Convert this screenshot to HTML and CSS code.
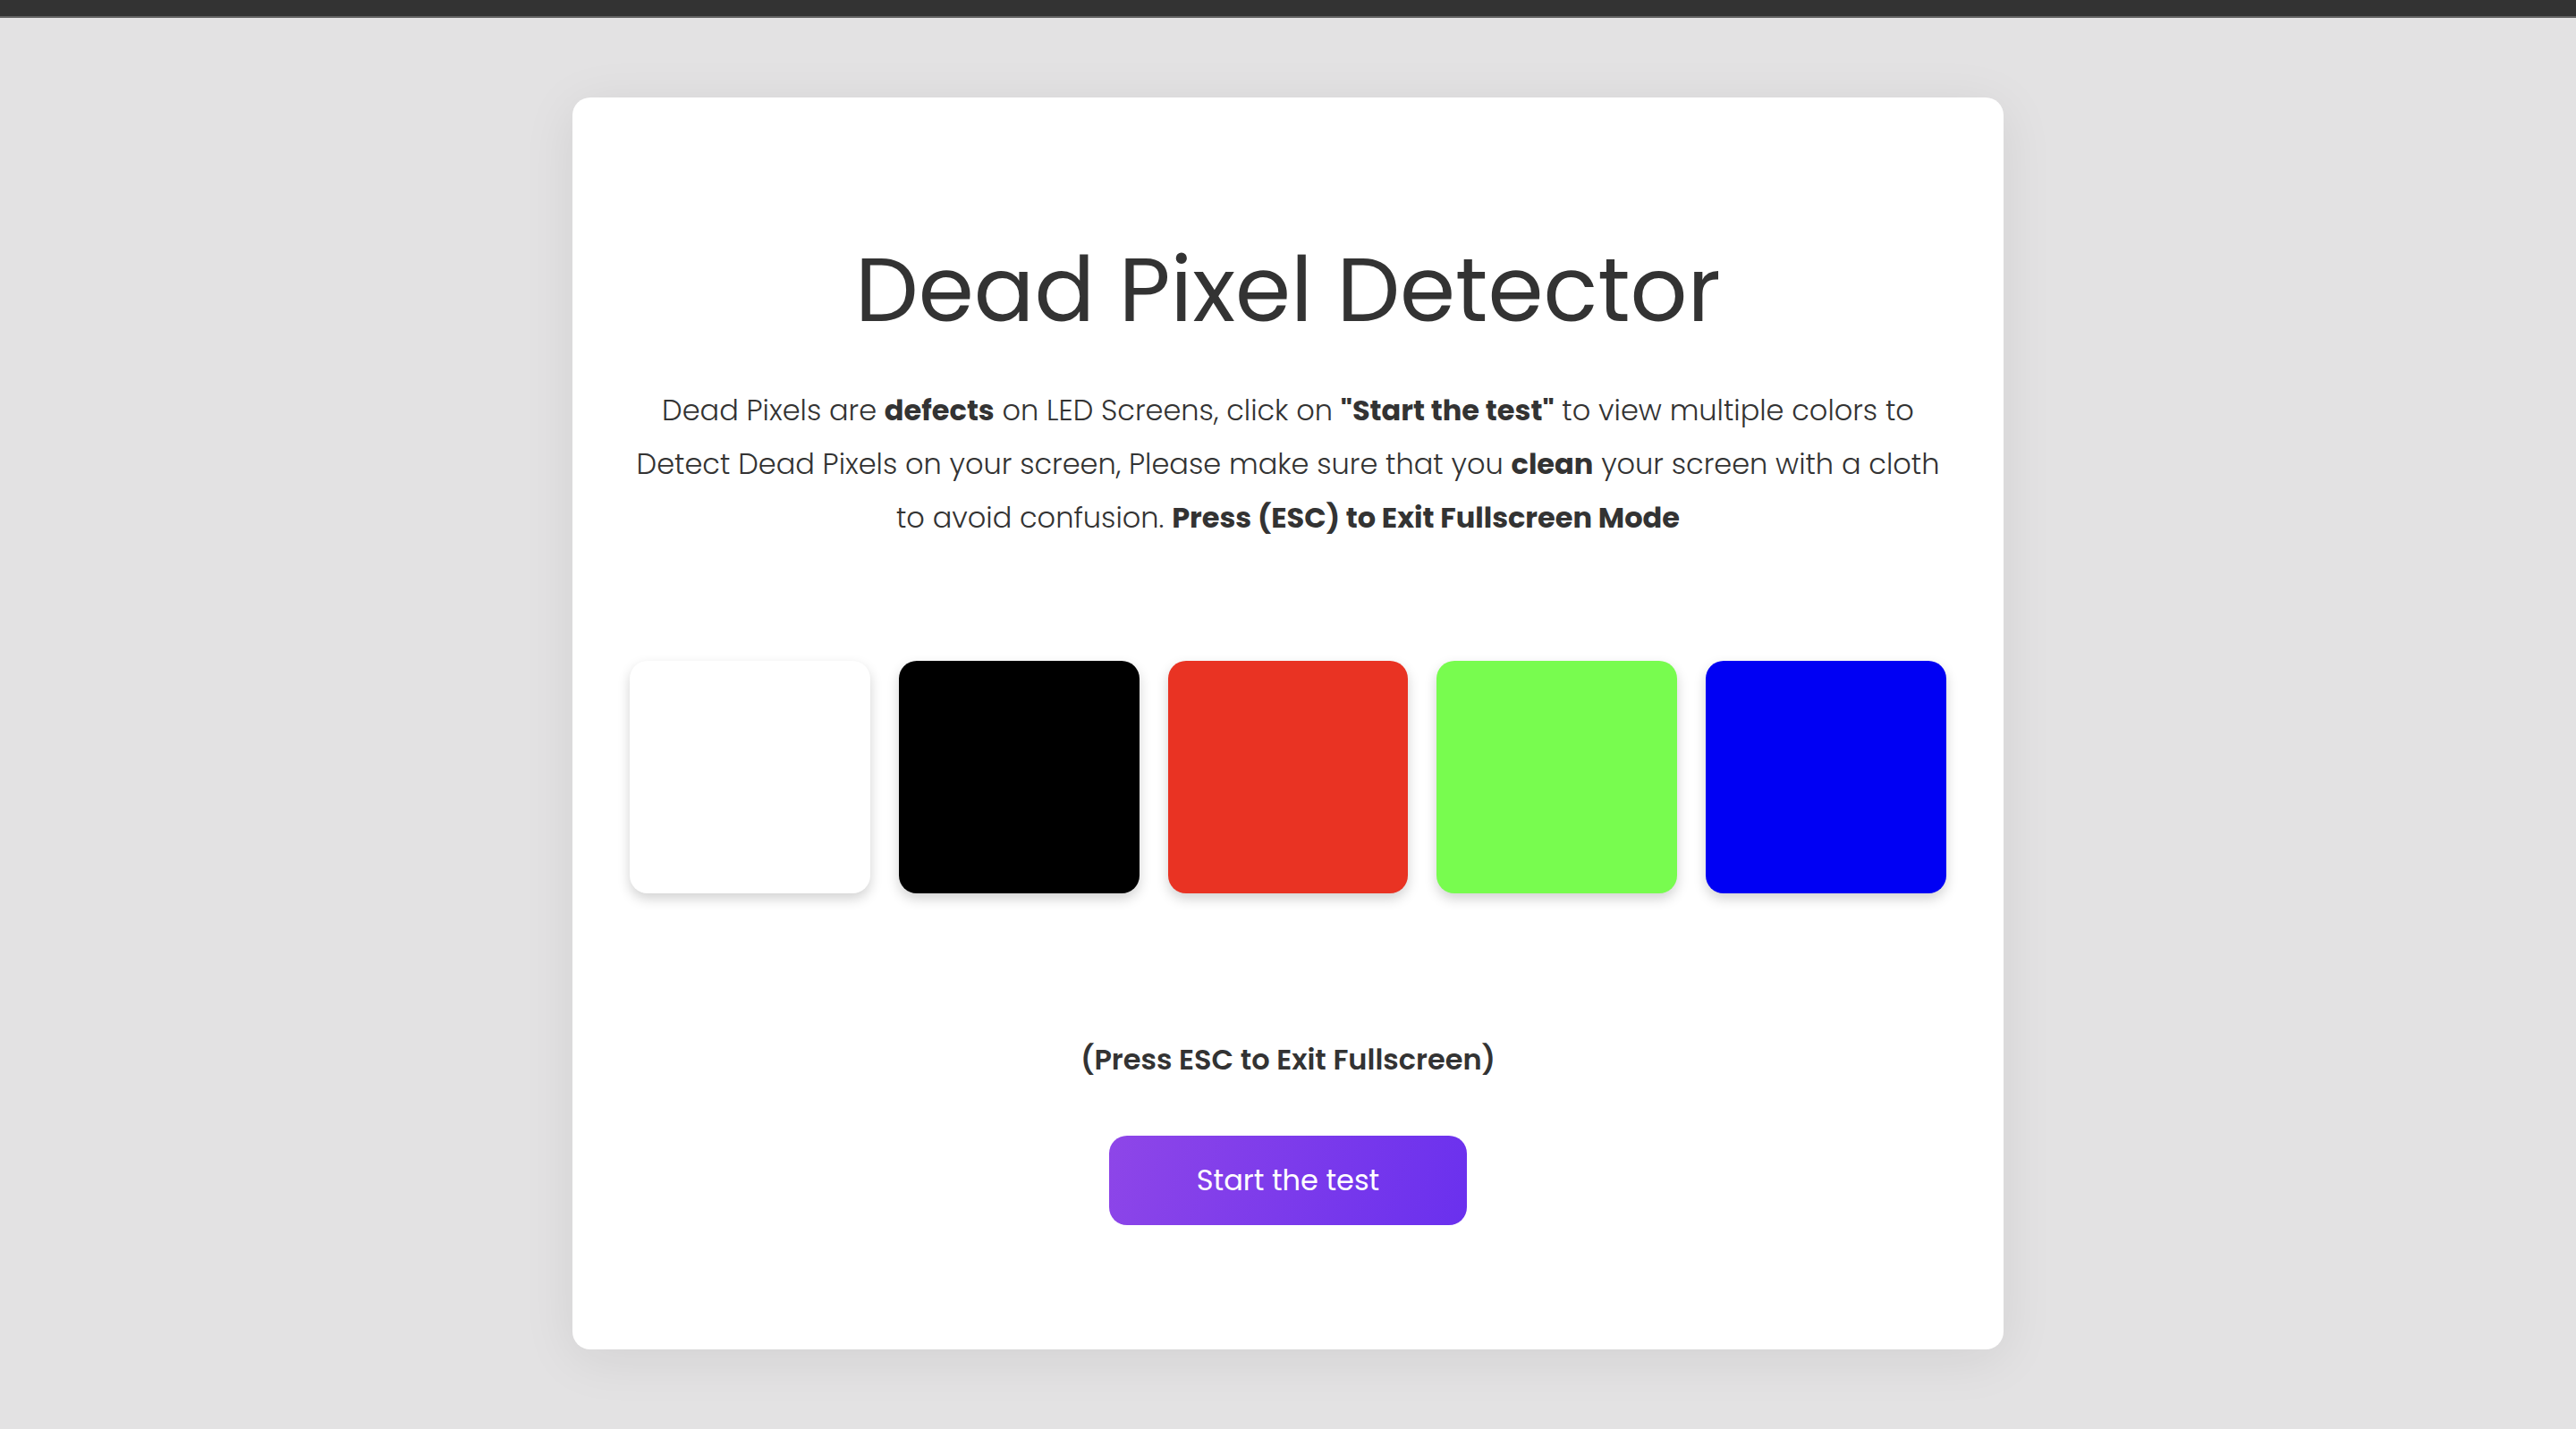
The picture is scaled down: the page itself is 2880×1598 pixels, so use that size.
FILE: index.html
```html
<!DOCTYPE html>
<html lang="en">
<head>
<meta charset="utf-8">
<title>Dead Pixel Detector</title>
<link rel="stylesheet" href="styles.css">
</head>
<body>
<div class="topbar"></div>
<main class="page">
  <section class="card">
    <h1 class="title">Dead Pixel Detector</h1>
    <p class="intro">Dead Pixels are <b>defects</b> on LED Screens, click on <b>"Start the test"</b> to view multiple colors to<br>Detect Dead Pixels on your screen, Please make sure that you <b>clean</b> your screen with a cloth<br>to avoid confusion. <b>Press (ESC) to Exit Fullscreen Mode</b></p>
    <div class="swatches">
      <div class="swatch swatch-white"></div>
      <div class="swatch swatch-black"></div>
      <div class="swatch swatch-red"></div>
      <div class="swatch swatch-green"></div>
      <div class="swatch swatch-blue"></div>
    </div>
    <p class="esc-note">(Press ESC to Exit Fullscreen)</p>
    <button class="start-btn" type="button">Start the test</button>
  </section>
</main>
</body>
</html>
```

FILE: styles.css
```css
* { box-sizing: border-box; }
html, body { margin: 0; padding: 0; }
body {
  background: #e3e2e3;
  font-family: "Poppins", "Inter", "Noto Sans", sans-serif;
  color: #333333;
  min-height: 1598px;
}
.topbar {
  height: 20px;
  background: #333333;
  border-bottom: 2px solid #626262;
}
.page {
  display: flex;
  justify-content: center;
  padding-top: 89px;
}
.card {
  width: 1600px;
  height: 1400px;
  background: #ffffff;
  border-radius: 20px;
  box-shadow: 0 10px 60px rgba(0, 0, 0, 0.08);
  padding: 155px 64px 0;
  display: flex;
  flex-direction: column;
  align-items: center;
}
.title {
  margin: 0;
  font-size: 100px;
  font-weight: 400;
  line-height: 120px;
  color: #333333;
  letter-spacing: 0;
}
.intro {
  margin: 45px 0 0;
  font-size: 32px;
  font-weight: 300;
  line-height: 60px;
  text-align: center;
  white-space: nowrap;
}
.intro b { font-weight: 700; }
.swatches {
  margin-top: 130px;
  width: 100%;
  display: grid;
  grid-template-columns: repeat(5, 1fr);
  gap: 32px;
}
.swatch {
  height: 260px;
  border-radius: 20px;
  box-shadow: 0 6px 14px rgba(0, 0, 0, 0.18);
}
.swatch-white { background: #ffffff; }
.swatch-black { background: #000000; }
.swatch-red { background: #e93323; }
.swatch-green { background: #78fc4f; }
.swatch-blue { background: #0000f4; }
.esc-note {
  margin: 159px 0 0;
  font-size: 32px;
  font-weight: 600;
  line-height: 54px;
}
.start-btn {
  margin-top: 58px;
  width: 400px;
  height: 100px;
  border: none;
  border-radius: 20px;
  background: linear-gradient(110deg, #8e46e8 0%, #6a30ee 100%);
  color: #ffffff;
  font-family: inherit;
  font-size: 32px;
  font-weight: 400;
  cursor: pointer;
}
```
